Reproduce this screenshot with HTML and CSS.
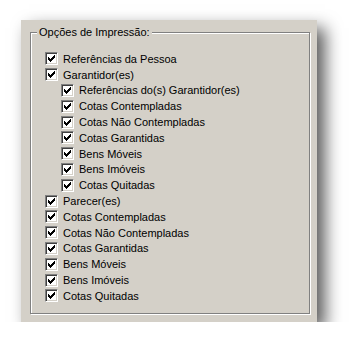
FILE: index.html
```html
<!DOCTYPE html>
<html lang="pt">
<head>
    <meta charset="UTF-8">
    <title>Opções de Impressão</title>
    <link rel="stylesheet" href="styles.css">
</head>
<body>
    <svg class="defs" width="0" height="0">
        <symbol id="check" viewBox="0 0 7 7">
            <path d="M6 0h1v1h-1z M5 1h2v1h-2z M0 2h1v1h-1z M4 2h3v1h-3z M0 3h2v1h-2z M3 3h3v1h-3z M0 4h5v1h-5z M1 5h3v1h-3z M2 6h1v1h-1z"/>
        </symbol>
    </svg>
    <div class="panel">
        <div class="group">
            <span class="legend">Opções de Impressão:</span>
            <div class="row"><span class="box"><svg><use href="#check"/></svg></span>Referências da Pessoa</div>
            <div class="row"><span class="box"><svg><use href="#check"/></svg></span>Garantidor(es)</div>
            <div class="row sub"><span class="box"><svg><use href="#check"/></svg></span>Referências do(s) Garantidor(es)</div>
            <div class="row sub"><span class="box"><svg><use href="#check"/></svg></span>Cotas Contempladas</div>
            <div class="row sub"><span class="box"><svg><use href="#check"/></svg></span>Cotas Não Contempladas</div>
            <div class="row sub"><span class="box"><svg><use href="#check"/></svg></span>Cotas Garantidas</div>
            <div class="row sub"><span class="box"><svg><use href="#check"/></svg></span>Bens Móveis</div>
            <div class="row sub"><span class="box"><svg><use href="#check"/></svg></span>Bens Imóveis</div>
            <div class="row sub"><span class="box"><svg><use href="#check"/></svg></span>Cotas Quitadas</div>
            <div class="row"><span class="box"><svg><use href="#check"/></svg></span>Parecer(es)</div>
            <div class="row"><span class="box"><svg><use href="#check"/></svg></span>Cotas Contempladas</div>
            <div class="row"><span class="box"><svg><use href="#check"/></svg></span>Cotas Não Contempladas</div>
            <div class="row"><span class="box"><svg><use href="#check"/></svg></span>Cotas Garantidas</div>
            <div class="row"><span class="box"><svg><use href="#check"/></svg></span>Bens Móveis</div>
            <div class="row"><span class="box"><svg><use href="#check"/></svg></span>Bens Imóveis</div>
            <div class="row"><span class="box"><svg><use href="#check"/></svg></span>Cotas Quitadas</div>
        </div>
    </div>
</body>
</html>
```

FILE: styles.css
```css
* {
    box-sizing: border-box;
}

body {
    margin: 0;
    background: #fff;
    font-family: 'Liberation Sans', Arial, sans-serif;
    font-size: 11px;
    color: #000;
}

.defs {
    position: absolute;
}

.panel {
    margin: 20px 0 0 21px;
    width: 296px;
    height: 302px;
    padding: 12px 7px 8px 9px;
    background: #d4d0c8;
    box-shadow: 8px 8px 16px rgba(0, 0, 0, 0.65);
}

.group {
    position: relative;
    height: 100%;
    padding: 18px 0 0 14px;
    border: 1px solid #808080;
    box-shadow: inset 1px 1px 0 #fff, 1px 1px 0 #fff;
}

.legend {
    position: absolute;
    left: 6px;
    top: -8px;
    padding: 0 2px;
    background: #d4d0c8;
    line-height: 14px;
}

.row {
    display: flex;
    align-items: center;
    height: 15.8px;
    white-space: nowrap;
}

.row.sub {
    padding-left: 16px;
}

.box {
    display: flex;
    align-items: center;
    justify-content: center;
    width: 13px;
    height: 13px;
    margin-right: 5px;
    background: #fff;
    border: 1px solid;
    border-color: #808080 #fff #fff #808080;
    box-shadow: inset 1px 1px 0 #404040, inset -1px -1px 0 #d4d0c8;
}

.box svg {
    width: 7px;
    height: 7px;
    fill: #000;
    shape-rendering: crispEdges;
}
```
